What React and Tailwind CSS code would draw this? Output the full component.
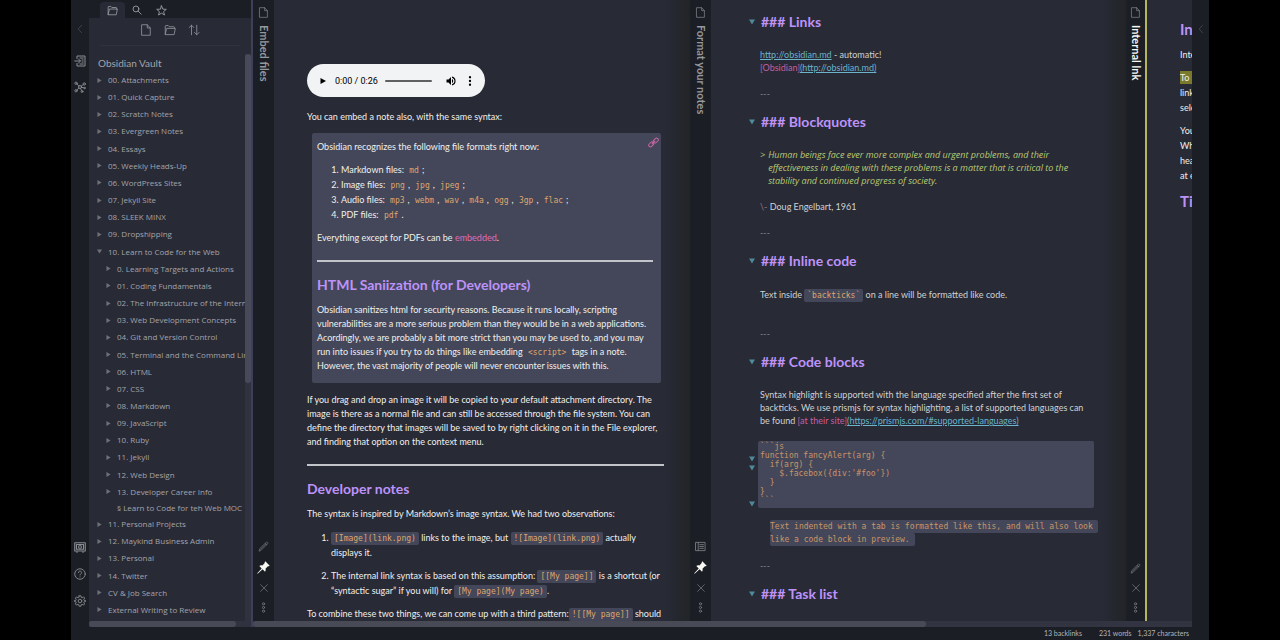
import React, { useState } from 'react';
import clsx from 'clsx';

const FOLDERS = [
  '00. Attachments',
  '01. Quick Capture',
  '02. Scratch Notes',
  '03. Evergreen Notes',
  '04. Essays',
  '05. Weekly Heads-Up',
  '06. WordPress Sites',
  '07. Jekyll Site',
  '08. SLEEK MINX',
  '09. Dropshipping',
];

const COURSE_FOLDERS = [
  '0. Learning Targets and Actions',
  '01. Coding Fundamentals',
  '02. The Infrastructure of the Internet',
  '03. Web Development Concepts',
  '04. Git and Version Control',
  '05. Terminal and the Command Line',
  '06. HTML',
  '07. CSS',
  '08. Markdown',
  '09. JavaScript',
  '10. Ruby',
  '11. Jekyll',
  '12. Web Design',
  '13. Developer Career Info',
];

const MORE_FOLDERS = [
  '11. Personal Projects',
  '12. Maykind Business Admin',
  '13. Personal',
  '14. Twitter',
  'CV & Job Search',
  'External Writing to Review',
];

const TREE = [
  ...FOLDERS.map((name) => ({ name })),
  { name: '10. Learn to Code for the Web', open: true },
  ...COURSE_FOLDERS.map((name) => ({ name, child: true })),
  { name: '§ Learn to Code for teh Web MOC', child: true, file: true },
  ...MORE_FOLDERS.map((name) => ({ name })),
];

const CODE_LINES = [
  '```js',
  'function fancyAlert(arg) {',
  '  if(arg) {',
  "    $.facebox({div:'#foo'})",
  '  }',
  '}',
  '```',
];

// ---- icons ----

function Icon({ className = 'size-3', children, width = 1.8 }) {
  return (
    <svg
      viewBox="0 0 24 24"
      className={className}
      fill="none"
      stroke="currentColor"
      strokeWidth={width}
      strokeLinecap="round"
      strokeLinejoin="round"
      aria-hidden="true"
    >
      {children}
    </svg>
  );
}

const FileIcon = ({ className }) => (
  <Icon className={className}>
    <path d="M4 1.5h10.5L20.5 8v14.5H4z" />
    <path d="M14.5 1.5V8h6" />
  </Icon>
);

const FolderIcon = ({ className }) => (
  <Icon className={className}>
    <path d="M2.5 20.5V4.5c0-.8.5-1.3 1.3-1.3h4.7l2 2.3h9.2c.8 0 1.3.5 1.3 1.3v2" />
    <path d="M2.5 20.5 5.3 8.8h17.4l-2.4 11.7z" />
  </Icon>
);

const SearchIcon = ({ className }) => (
  <Icon className={className} width={2.2}>
    <circle cx="9.5" cy="9.5" r="7" />
    <path d="m14.8 14.8 7.2 7.2" />
  </Icon>
);

const StarIcon = ({ className }) => (
  <Icon className={className} width={2}>
    <path d="m12 1.8 2.9 7.2 7.6.5-5.9 4.9 1.9 7.5L12 17.7l-6.5 4.2 1.9-7.5-5.9-4.9 7.6-.5z" />
  </Icon>
);

const SortIcon = ({ className }) => (
  <Icon className={className}>
    <path d="M7 21.5v-19M2.5 7 7 2.5 11.5 7M17.5 2.5v19M13 17l4.5 4.5L22 17" />
  </Icon>
);

const ChevronIcon = ({ className }) => (
  <Icon className={className}>
    <path d="M16 3 7.5 12l8.5 9" />
  </Icon>
);

const SwitcherIcon = ({ className }) => (
  <Icon className={className} width={2}>
    <path d="M6 7V2h16v20H6v-5" />
    <path d="M1.5 12h11M9 8l4 4-4 4M12 6h6.5M16 10h2.5M16 14h2.5M12 18h6.5" />
  </Icon>
);

const GraphIcon = ({ className }) => (
  <Icon className={className}>
    <circle cx="12" cy="12" r="3" />
    <circle cx="4" cy="4.5" r="2.3" />
    <circle cx="20.5" cy="6" r="2.3" />
    <circle cx="4" cy="19.5" r="2.3" />
    <circle cx="16" cy="21" r="2" />
    <circle cx="21" cy="14" r="1.5" />
    <path d="m5.7 6 4.2 3.9M18.5 7.2l-4 3M5.7 17.9 10 14.2M13.2 14.8l2 4.2M15 12.5l4.5 1.2" />
  </Icon>
);

const VaultIcon = ({ className }) => (
  <Icon className={className} width={2.2}>
    <rect x="1.5" y="3.5" width="21" height="16.5" />
    <rect x="5" y="7" width="14" height="9.5" />
    <circle cx="12" cy="11.8" r="2.8" />
    <path d="M5 22h2M17 22h2" />
  </Icon>
);

const HelpIcon = ({ className }) => (
  <Icon className={className}>
    <circle cx="12" cy="12" r="10.5" />
    <path d="M8.8 9.2c.2-2 1.5-3 3.3-3s3.2 1.1 3.2 2.9c0 2.4-3.2 2.6-3.2 5M12.1 17.5v.3" />
  </Icon>
);

const GearIcon = ({ className }) => (
  <Icon className={className}>
    <path d="M10.3 1.5h3.4l.6 3 2 .9 2.6-1.7 2.4 2.4-1.7 2.6.9 2 3 .6v1.4l-3 .6-.9 2 1.7 2.6-2.4 2.4-2.6-1.7-2 .9-.6 3h-3.4l-.6-3-2-.9-2.6 1.7-2.4-2.4 1.7-2.6-.9-2-3-.6v-1.4l3-.6.9-2-1.7-2.6 2.4-2.4 2.6 1.7 2-.9z" />
    <circle cx="12" cy="12" r="3.6" />
  </Icon>
);

const PencilIcon = ({ className }) => (
  <Icon className={className} width={1.5}>
    <path d="M2.5 21.5 4 16.5 18 2.8c1.8-1.5 4.7 1 3.2 3L7.3 19.9z" />
    <path d="M16 5l3.2 3.2M5 18.5 16.5 7" />
  </Icon>
);

const ReadingIcon = ({ className }) => (
  <Icon className={className} width={2}>
    <rect x="2" y="3" width="20" height="18" />
    <path d="M7 3v18M10.5 8h8M10.5 12h8M10.5 16h8" />
  </Icon>
);

const PinIcon = ({ className }) => (
  <svg viewBox="0 0 24 24" className={className} fill="currentColor" aria-hidden="true">
    <path d="M15.3.5 23.5 8.7l-1.8 1.2-1.6-.2-4.4 4.4c.7 2 .4 4.1-.9 5.6l-4.5-4.4L1.2 23.5l-.7-.7 8.2-9.1-4.4-4.5c1.5-1.3 3.6-1.6 5.6-.9l4.4-4.4-.2-1.6z" />
  </svg>
);

const CloseIcon = ({ className }) => (
  <Icon className={className}>
    <path d="m4 4 16 16M20 4 4 20" />
  </Icon>
);

const MoreIcon = ({ className }) => (
  <Icon className={className}>
    <circle cx="12" cy="4" r="2.4" />
    <circle cx="12" cy="12" r="2.4" />
    <circle cx="12" cy="20" r="2.4" />
  </Icon>
);

const LinkIcon = ({ className }) => (
  <Icon className={className} width={2.2}>
    <rect x="1" y="12.5" width="12" height="7.5" rx="3.7" transform="rotate(-45 7 16.3)" />
    <rect x="11" y="4" width="12" height="7.5" rx="3.7" transform="rotate(-45 17 7.7)" />
    <path d="m9 15 6-6" />
  </Icon>
);

function Triangle({ down, className }) {
  return (
    <svg viewBox="0 0 6 6" className={clsx('shrink-0', className)} fill="currentColor" aria-hidden="true">
      <path d={down ? 'M0 .5h6L3 5.5z' : 'M.5 0v6l5-3z'} />
    </svg>
  );
}

function IconButton({ label, className, children }) {
  return (
    <button type="button" aria-label={label} className={clsx('flex items-center justify-center', className)}>
      {children}
    </button>
  );
}

// ---- sidebar ----

function Ribbon() {
  return (
    <nav className="flex w-[18px] shrink-0 flex-col items-center bg-[#1b1e25] pt-6 text-[#8b8d93]">
      <IconButton label="Collapse sidebar" className="text-[#4a4d54]">
        <ChevronIcon className="size-[10px]" />
      </IconButton>
      <IconButton label="Open quick switcher" className="mt-[21px]">
        <SwitcherIcon className="size-3" />
      </IconButton>
      <IconButton label="Open graph view" className="mt-[14px]">
        <GraphIcon className="size-3" />
      </IconButton>
      <div className="mt-auto flex flex-col gap-[15px] pb-5">
        <IconButton label="Open another vault">
          <VaultIcon className="size-3" />
        </IconButton>
        <IconButton label="Help">
          <HelpIcon className="size-3" />
        </IconButton>
        <IconButton label="Settings">
          <GearIcon className="size-3" />
        </IconButton>
      </div>
    </nav>
  );
}

function TreeRow({ item }) {
  return (
    <li
      className={clsx(
        "flex items-center font-['Open_Sans',sans-serif] text-[8px] leading-[16px] whitespace-nowrap",
        item.child ? 'pl-[17px]' : 'pl-2',
        item.file && '-my-px'
      )}
    >
      <span className="flex w-[11px] shrink-0">
        {!item.file && <Triangle down={item.open} className="size-[5px] text-[#6f7178]" />}
      </span>
      {item.name}
    </li>
  );
}

function Sidebar() {
  return (
    <aside className="flex w-[164px] shrink-0 flex-col border-r-2 border-[#3d4058] bg-[#282a36] text-[#a3a4aa]">
      <div className="flex h-[18px] items-end bg-[#1b1e25] pl-[11px] text-[#9b9ca2]">
        <IconButton label="Files" className="h-4 w-[25px] rounded-t bg-[#282a36]">
          <FolderIcon className="size-[11px]" />
        </IconButton>
        <IconButton label="Search" className="h-4 w-6">
          <SearchIcon className="size-[10px]" />
        </IconButton>
        <IconButton label="Starred" className="h-4 w-6">
          <StarIcon className="size-[11px]" />
        </IconButton>
      </div>
      <div className="mx-[11px] flex h-7 items-center justify-center gap-3 border-b border-[#30323d] pb-1 text-[#8b8d93]">
        <IconButton label="New note">
          <FileIcon className="size-3" />
        </IconButton>
        <IconButton label="New folder">
          <FolderIcon className="size-3" />
        </IconButton>
        <IconButton label="Change sort order">
          <SortIcon className="size-3" />
        </IconButton>
      </div>
      <div className="flex min-h-0 flex-1 pt-2">
        <div className="flex min-w-0 flex-1 flex-col overflow-hidden pb-[3px]">
          <h2 className="shrink-0 pl-[9px] text-[10px] leading-[18px]">Obsidian Vault</h2>
          <ul className="flex flex-1 flex-col justify-between">
            {TREE.map((item) => (
              <TreeRow key={item.name} item={item} />
            ))}
          </ul>
        </div>
        <div className="w-[6px] bg-[#303240]">
          <div className="h-[58%] rounded-full bg-[#484a59]" />
        </div>
      </div>
      <div className="h-[6px] bg-[#303240]">
        <div className="h-full w-[147px] rounded-full bg-[#484a56]" />
      </div>
    </aside>
  );
}

// ---- panes ----

function PaneStrip({ title, active, pinned, mode }) {
  return (
    <header
      className={clsx(
        'flex w-[21px] shrink-0 flex-col items-center bg-[#1b1e25] pt-[7px] pb-2 text-[#77797f]',
        active && 'border-r-2 border-[#b5b45f]'
      )}
    >
      <FileIcon className="size-[11px]" />
      <h1
        className={clsx(
          'mt-[7px] text-[11px] leading-3 font-bold whitespace-nowrap [writing-mode:vertical-rl]',
          active ? 'text-[#f8f8f2]' : 'text-[#96989c]'
        )}
      >
        {title}
      </h1>
      <div className="mt-auto flex flex-col items-center gap-[9px]">
        <IconButton label={mode === 'edit' ? 'Preview' : 'Edit'}>
          {mode === 'edit' ? <ReadingIcon className="size-[11px]" /> : <PencilIcon className="size-[11px]" />}
        </IconButton>
        {pinned && (
          <IconButton label="Unpin" className="text-[#f8f8f2]">
            <PinIcon className="size-[13px]" />
          </IconButton>
        )}
        <IconButton label="Close">
          <CloseIcon className="size-[10px]" />
        </IconButton>
        <IconButton label="More options">
          <MoreIcon className="size-[11px]" />
        </IconButton>
      </div>
    </header>
  );
}

function PaneShade() {
  return <div className="w-[25px] shrink-0 bg-gradient-to-r from-[#282a36] to-[#222427]" />;
}

function Code({ children, boxed }) {
  return (
    <code
      className={clsx(
        "rounded-xs px-[3px] py-[2px] font-['DejaVu_Sans_Mono',monospace] text-[8px] leading-none text-[#dfa66c]",
        boxed && 'bg-[#44475a]'
      )}
    >
      {children}
    </code>
  );
}

function AudioPlayer() {
  return (
    <div className="flex h-[33px] w-[178px] items-center rounded-full bg-[#f1f3f4] pr-[9px] pl-[13px] text-black">
      <button type="button" aria-label="Play">
        <svg viewBox="0 0 6 6" className="size-[6px]" aria-hidden="true">
          <path d="M.5 0v6l5.5-3z" />
        </svg>
      </button>
      <span className="ml-[9px] font-['Roboto',sans-serif] text-[9px] whitespace-nowrap">0:00 / 0:26</span>
      <div className="ml-[7px] h-[2px] flex-1 rounded-full bg-[#5f6062]" />
      <button type="button" aria-label="Mute" className="ml-[13px]">
        <svg viewBox="0 0 24 24" className="size-3" aria-hidden="true">
          <path d="M3 9v6h4l5 5V4L7 9zm13.5 3A4.5 4.5 0 0 0 14 8v8a4.5 4.5 0 0 0 2.5-4M14 3.2v2.1a7 7 0 0 1 0 13.4v2.1A9 9 0 0 0 14 3.2" />
        </svg>
      </button>
      <button type="button" aria-label="More media controls" className="ml-[7px]">
        <svg viewBox="0 0 24 24" className="size-3" aria-hidden="true">
          <circle cx="12" cy="4.5" r="2.3" />
          <circle cx="12" cy="12" r="2.3" />
          <circle cx="12" cy="19.5" r="2.3" />
        </svg>
      </button>
    </div>
  );
}

const Heading = ({ children }) => (
  <h2 className="mt-[13px] mb-2 text-[14px] leading-5 font-bold text-[#bd93f9]">{children}</h2>
);

const Rule = () => <hr className="mt-[15px] h-[2px] border-0 bg-[#c3c4c9]" />;

function EmbedFiles() {
  return (
    <article className="w-[391px] shrink-0 pt-16 pl-[33px] text-[9px] leading-[14px] whitespace-nowrap text-[#f0f0ec]">
      <div className="w-[357px]">
        <AudioPlayer />
        <p className="mt-[13px]">You can embed a note also, with the same syntax:</p>
        <section className="relative mt-[9px] mr-[3px] ml-[5px] rounded-xs bg-[#44475a] pt-[7px] pr-2 pb-[10px] pl-[5px]">
          <a href="#embedded" aria-label="Open link" className="absolute top-1 right-[2px] text-[#c765a3]">
            <LinkIcon className="size-[11px]" />
          </a>
          <p>Obsidian recognizes the following file formats right now:</p>
          <ol className="mt-2 list-decimal pl-6 leading-[15px]">
            <li>
              Markdown files: <Code>md</Code>;
            </li>
            <li>
              Image files: <Code>png</Code>, <Code>jpg</Code>, <Code>jpeg</Code>;
            </li>
            <li>
              Audio files: <Code>mp3</Code>, <Code>webm</Code>, <Code>wav</Code>, <Code>m4a</Code>, <Code>ogg</Code>,{' '}
              <Code>3gp</Code>, <Code>flac</Code>;
            </li>
            <li>
              PDF files: <Code>pdf</Code>.
            </li>
          </ol>
          <p className="mt-[9px]">
            Everything except for PDFs can be{' '}
            <a href="#embedded" className="text-[#e06cb4]">
              embedded
            </a>
            .
          </p>
          <Rule />
          <Heading>HTML Saniization (for Developers)</Heading>
          <p>
            Obsidian sanitizes html for security reasons. Because it runs locally, scripting
            <br />
            vulnerabilities are a more serious problem than they would be in a web applications.
            <br />
            Acordingly, we are probably a bit more strict than you may be used to, and you may
            <br />
            run into issues if you try to do things like embedding <Code>&lt;script&gt;</Code> tags in a note.
            <br />
            However, the vast majority of people will never encounter issues with this.
          </p>
        </section>
        <p className="mt-[10px]">
          If you drag and drop an image it will be copied to your default attachment directory. The
          <br />
          image is there as a normal file and can still be accessed through the file system. You can
          <br />
          define the directory that images will be saved to by right clicking on it in the File explorer,
          <br />
          and finding that option on the context menu.
        </p>
        <Rule />
        <Heading>Developer notes</Heading>
        <p>The syntax is inspired by Markdown’s image syntax. We had two observations:</p>
        <ol className="mt-[9px] list-decimal space-y-2 pl-6 leading-[15px]">
          <li>
            <Code boxed>[Image](link.png)</Code> links to the image, but <Code boxed>![Image](link.png)</Code> actually
            <br />
            displays it.
          </li>
          <li>
            The internal link syntax is based on this assumption: <Code boxed>[[My page]]</Code> is a shortcut (or
            <br />
            “syntactic sugar” if you will) for <Code boxed>[My page](My page)</Code>.
          </li>
        </ol>
        <p className="mt-[9px]">
          To combine these two things, we can come up with a third pattern:
          <Code boxed>![[My page]]</Code> should
        </p>
      </div>
    </article>
  );
}

function EditorHeading({ children }) {
  return (
    <h2 className="flex items-center pt-[11px] pb-4 text-[14px] leading-[21px] font-bold text-[#bd93f9]">
      <span className="w-3 shrink-0">
        <Triangle down className="size-[6px] text-[#4f8a9c]" />
      </span>
      {children}
    </h2>
  );
}

const EditorDivider = ({ className = 'mt-[13px]' }) => (
  <p className={clsx('pl-[11px] text-[#7f8189]', className)}>---</p>
);

function FormatYourNotes() {
  return (
    <article className="w-[390px] shrink-0 pl-[38px] text-[9px] leading-[13px] whitespace-nowrap text-[#d0d1d0]">
      <EditorHeading>### Links</EditorHeading>
      <p className="pl-[11px]">
        <a href="#obsidian" className="text-[#6bb4ca] underline">
          http://obsidian.md
        </a>{' '}
        - automatic!
        <br />
        <span className="text-[#c75f9f]">[Obsidian]</span>
        <a href="#obsidian" className="text-[#6bb4ca] underline">
          (http://obsidian.md)
        </a>
      </p>
      <EditorDivider />
      <EditorHeading>### Blockquotes</EditorHeading>
      <blockquote className="flex gap-[3px] pl-[11px] font-['Open_Sans',sans-serif] text-[#bccb74] italic">
        <span>&gt;</span>
        <p>
          Human beings face ever more complex and urgent problems, and their
          <br />
          effectiveness in dealing with these problems is a matter that is critical to the
          <br />
          stability and continued progress of society.
        </p>
      </blockquote>
      <p className="mt-[13px] pl-[11px]">
        <span className="text-[#9b7480]">\-</span> Doug Engelbart, 1961
      </p>
      <EditorDivider />
      <EditorHeading>### Inline code</EditorHeading>
      <p className="pt-px pl-[11px]">
        Text inside <Code boxed>`backticks`</Code> on a line will be formatted like code.
      </p>
      <EditorDivider className="mt-[26px]" />
      <EditorHeading>### Code blocks</EditorHeading>
      <p className="pl-[11px]">
        Syntax highlight is supported with the language specified after the first set of
        <br />
        backticks. We use prismjs for syntax highlighting, a list of supported languages can
        <br />
        be found <span className="text-[#c75f9f]">[at their site]</span>
        <a href="#prismjs" className="text-[#6bb4ca] underline">
          (https://prismjs.com/#supported-languages)
        </a>
      </p>
      <div className="mt-[14px] mr-[7px] flex">
        <div className="w-[9px] shrink-0 pt-1 text-[#4f8a9c]">
          {CODE_LINES.map((line, idx) => (
            <div key={idx} className="flex h-[9px] items-center">
              {[1, 2, 6].includes(idx) && <Triangle down className="size-[6px]" />}
            </div>
          ))}
        </div>
        <pre className="flex-1 rounded-xs bg-[#44475a] pt-px pb-px pl-[2px] font-['DejaVu_Sans_Mono',monospace] text-[8px] leading-[9px] text-[#c99566]">
          {CODE_LINES.join('\n')}
        </pre>
      </div>
      <p className="mt-3 pl-[21px] text-[8px] text-[#c99566]">
        <code className="rounded-xs bg-[#44475a] box-decoration-clone py-[2px] pr-[5px] font-['DejaVu_Sans_Mono',monospace]">
          Text indented with a tab is formatted like this, and will also look
          <br />
          like a code block in preview.
        </code>
      </p>
      <EditorDivider />
      <EditorHeading>### Task list</EditorHeading>
    </article>
  );
}

function InternalLink() {
  return (
    <article className="min-w-0 flex-1 overflow-hidden bg-[#282a36] pt-[19px] pl-[33px] text-[9px] leading-[15px] whitespace-nowrap text-[#f0f0ec]">
      <h2 className="text-[15px] leading-5 font-bold text-[#bd93f9]">In</h2>
      <p className="mt-2">Inte</p>
      <p className="mt-2">
        <mark className="bg-[#7b7a2c] py-px pr-2 text-[#f0f0ec]">To</mark>
        <br />
        link
        <br />
        sele
      </p>
      <p className="mt-2">
        You
        <br />
        Wh
        <br />
        hea
        <br />
        at e
      </p>
      <h2 className="mt-2 text-[15px] leading-5 font-bold text-[#bd93f9]">Ti</h2>
    </article>
  );
}

function Workspace() {
  return (
    <main className="flex min-w-0 flex-1 flex-col">
      <div className="flex min-h-0 flex-1 overflow-hidden bg-[#282a36]">
        <PaneStrip title="Embed files" pinned mode="preview" />
        <EmbedFiles />
        <PaneShade />
        <PaneStrip title="Format your notes" pinned mode="edit" />
        <FormatYourNotes />
        <PaneShade />
        <PaneStrip title="Internal lnk" active mode="preview" />
        <InternalLink />
      </div>
      <div className="h-[6px] bg-[#323442]">
        <div className="h-full w-[673px] rounded-full bg-[#484a56]" />
      </div>
    </main>
  );
}

export default function App() {
  const [stats] = useState({ backlinks: 13, words: 231, characters: 1337 });

  return (
    <div className="h-screen overflow-hidden bg-black px-[71px] font-['Lato',sans-serif]">
      <div className="flex h-full flex-col bg-[#1b1e25]">
        <div className="flex min-h-0 flex-1">
          <Ribbon />
          <Sidebar />
          <Workspace />
          <nav className="w-[17px] shrink-0 bg-[#1b1e25] pt-6 text-[#4a4d54]">
            <IconButton label="Expand right sidebar" className="w-full">
              <ChevronIcon className="size-[10px]" />
            </IconButton>
          </nav>
        </div>
        <footer className="flex h-[13px] shrink-0 items-center justify-end pr-5 text-[7px] text-[#b3b4b9]">
          <span>{stats.backlinks} backlinks</span>
          <span className="ml-[17px]">{stats.words} words</span>
          <span className="ml-[6px]">{stats.characters.toLocaleString('en-US')} characters</span>
        </footer>
      </div>
    </div>
  );
}
